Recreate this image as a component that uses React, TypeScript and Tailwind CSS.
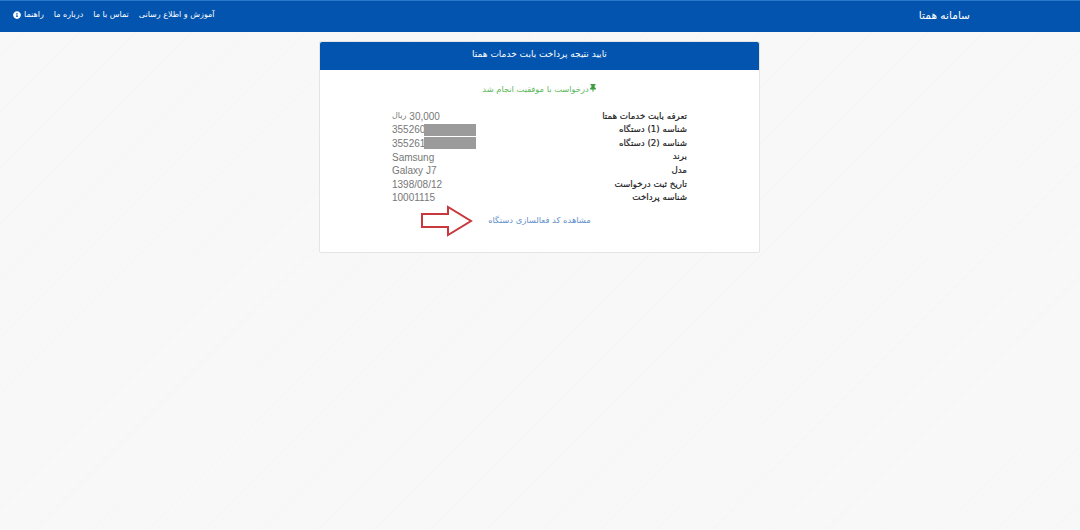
import React from "react";
import { FaInfoCircle, FaThumbtack } from "react-icons/fa";

const rows: { label: string; value: string; unit?: string; masked?: boolean }[] = [
  { label: "تعرفه بابت خدمات همتا", value: "30,000", unit: "ریال" },
  { label: "شناسه (1) دستگاه", value: "355260", masked: true },
  { label: "شناسه (2) دستگاه", value: "355261", masked: true },
  { label: "برند", value: "Samsung" },
  { label: "مدل", value: "Galaxy J7" },
  { label: "تاریخ ثبت درخواست", value: "1398/08/12" },
  { label: "شناسه پرداخت", value: "10001115" },
];

const App = () => {
  return (
    <div className="h-[530px] overflow-hidden bg-[#f8f8f8] bg-[repeating-linear-gradient(135deg,#f8f8f8_0px,#f8f8f8_38px,#f5f5f5_39px,#f8f8f8_40px)] font-['DejaVu_Sans',sans-serif] text-[#333]">
      {/* Navbar */}
      <div className="h-[32px] bg-[#0254ae] border-t border-[#2a78c8] flex items-center justify-between pl-[13px] pr-[110px] text-white">
        <div className="flex items-center gap-[10px] text-[8px] -mt-[4px]">
          <span className="flex items-center gap-[3px]">
            <FaInfoCircle className="w-[8px] h-[8px]" />
            <span dir="rtl">راهنما</span>
          </span>
          <span dir="rtl">درباره ما</span>
          <span dir="rtl">تماس با ما</span>
          <span dir="rtl">آموزش و اطلاع رسانی</span>
        </div>
        <div dir="rtl" className="text-[10.6px] -mt-[1px]">سامانه همتا</div>
      </div>

      {/* Result card */}
      <div className="w-[441px] h-[212px] mt-[9px] ml-[319px] bg-white border border-[#e4e4e4] rounded-[2px] flex flex-col">
        <div dir="rtl" className="h-[28px] shrink-0 pb-[2px] bg-[#0254ae] text-white text-[9px] flex items-center justify-center rounded-t-[2px]">
          تایید نتیجه پرداخت بابت خدمات همتا
        </div>

        <div className="flex items-center justify-center mt-[13px] text-[8.3px] text-[#5cb85c]">
          <span dir="rtl">درخواست با موفقیت انجام شد</span>
          <FaThumbtack className="w-[8px] h-[8px] text-[#3f9b3f] -mt-[2px]" />
        </div>

        <div className="mt-[14px] pl-[72px] pr-[72px] flex flex-col">
          {rows.map((row) => (
            <div key={row.label} className="h-[13.6px] flex items-center justify-between">
              <div className="flex items-center text-[10px] text-[#777] font-['Liberation_Sans',sans-serif]">
                <span>{row.value}</span>
                {row.masked && <span className="w-[52px] h-[12px] -ml-px bg-[#9b9b9b]" />}
                {row.unit && <span dir="rtl" className="order-first mr-[3px] text-[8px] font-['DejaVu_Sans',sans-serif]">{row.unit}</span>}
              </div>
              <div dir="rtl" className="text-[8.7px] text-[#222] [-webkit-text-stroke:0.2px_#222]">{row.label}</div>
            </div>
          ))}
        </div>

        <div className="relative mt-[8px] flex justify-center">
          <span dir="rtl" className="text-[8.4px] leading-[14px] text-[#5f8fc9]">مشاهده کد فعالسازی دستگاه</span>
          {/* Red arrow annotation */}
          <svg className="absolute left-[100px] -top-[8px]" width="53" height="32" viewBox="0 0 53 32">
            <path d="M2 9H28V2L51 16L28 30V22H2Z" fill="#fff" stroke="#c8383c" strokeWidth="2" />
          </svg>
        </div>
      </div>
    </div>
  );
};

export default App;
